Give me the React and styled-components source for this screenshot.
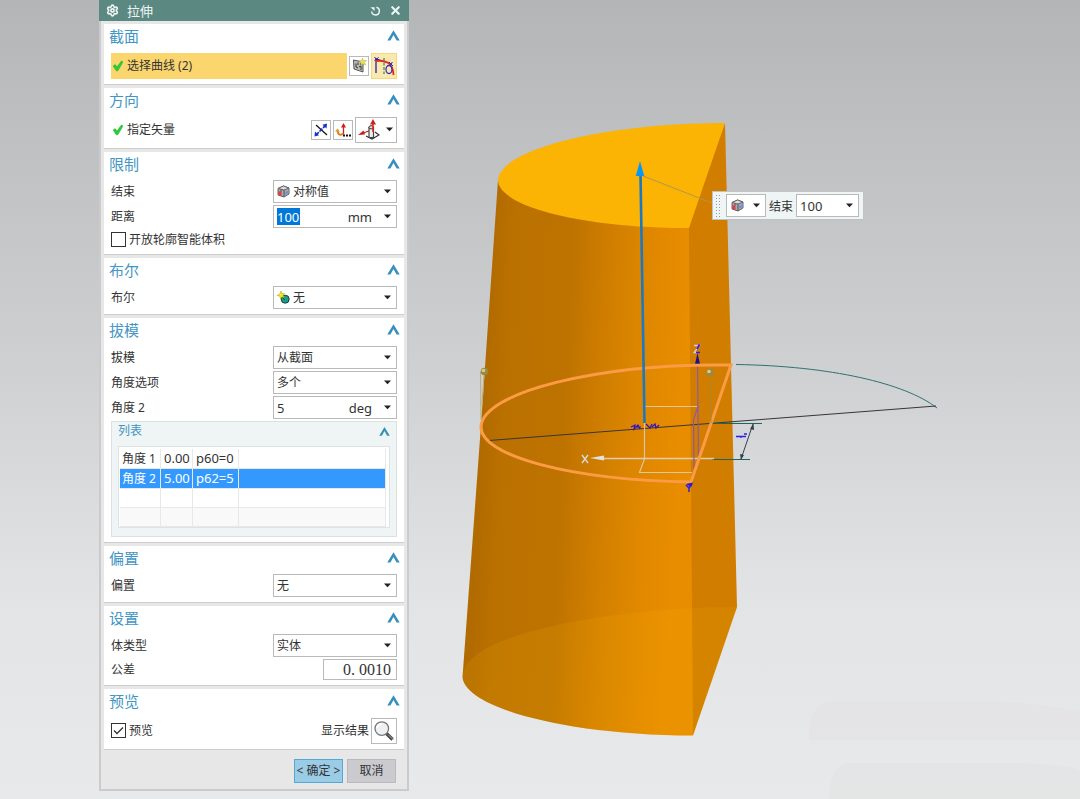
import React from "react";
import styled, { createGlobalStyle, css } from "styled-components";
import { Settings, X } from "lucide-react";

const GlobalStyle = createGlobalStyle`
  * {
    box-sizing: border-box;
  }
  body {
    margin: 0;
    font-family: "Noto Sans", "Noto Sans CJK SC", sans-serif;
    font-size: 12px;
    color: #333;
  }
  button, input, select {
    font: inherit;
    color: inherit;
    margin: 0;
    padding: 0;
  }
`;

const Page = styled.div`
  position: relative;
  display: flex;
  align-items: flex-start;
  min-height: 100vh;
  padding-left: 99px;
  overflow: hidden;
  background: linear-gradient(
    #b4b5b7 0%,
    #bdbec0 14%,
    #cfd0d2 46%,
    #dadbdc 62%,
    #e3e4e5 76%,
    #e8e9ea 100%
  );
`;

const Panel = styled.form`
  flex: 0 0 310px;
  line-height: 18px;
`;

const TitleBar = styled.header`
  display: flex;
  align-items: center;
  height: 21px;
  padding: 0 7px;
  gap: 8px;
  background: #5c8882;
  color: #edf5f3;
`;

const Title = styled.h1`
  flex: 1;
  margin: 0;
  font-size: 13px;
  font-weight: 400;
`;

const PlainButton = styled.button`
  display: flex;
  align-items: center;
  border: none;
  background: none;
  cursor: pointer;
`;

const PanelBody = styled.div`
  padding: 3px 3px 0;
  border: 2px solid #cbcbcb;
  border-top: none;
  background: #e7e7e7;
`;

const SectionBox = styled.section`
  margin-bottom: 3px;
  border-bottom: 1px solid #cdcdcd;
  background: #fff;
`;

const SectionHeader = styled.div`
  display: flex;
  align-items: center;
  justify-content: space-between;
  height: 23px;
  padding: 0 4px 0 5px;
`;

const SectionTitle = styled.h2`
  margin: 0;
  font-size: 15px;
  font-weight: 400;
  color: #4295c4;
`;

const SectionBody = styled.div`
  display: flex;
  flex-direction: column;
  gap: 2px;
  padding: 5px 7px;
`;

const Row = styled.div`
  display: flex;
  align-items: center;
  gap: 2px;
  height: ${(props) => props.$height || 23}px;
`;

const Label = styled.label`
  flex: 1;
`;

const Status = styled.div`
  display: flex;
  flex: 1;
  align-items: center;
  gap: 4px;
  height: 26px;
  padding-left: 2px;
  background: ${(props) => (props.$active ? "#fbd66f" : "transparent")};
`;

const IconButton = styled.button`
  display: flex;
  align-items: center;
  justify-content: center;
  gap: 6px;
  width: ${(props) => props.$width || 20}px;
  height: ${(props) => (props.$width ? 26 : 20)}px;
  padding-right: ${(props) => (props.$menu ? 2 : 0)}px;
  border: 1px solid #b9b9b9;
  background: #fff;
  cursor: pointer;
  ${(props) =>
    props.$active &&
    css`
      border-color: #f6d77c;
      background: #fae9ae;
    `}
`;

const Field = styled.span`
  display: flex;
  align-items: center;
  width: ${(props) => props.$width || 124}px;
  height: ${(props) => props.$height || 23}px;
  padding: 0 5px 0 3px;
  border: 1px solid #b9b9b9;
  background: #fff;
`;

const Select = styled.select`
  flex: 1;
  min-width: 0;
  height: 21px;
  border: none;
  outline: none;
  background: none;
  appearance: none;
`;

const FieldIcon = styled.span`
  display: flex;
  margin-right: 3px;
`;

const MenuButton = styled.button`
  display: flex;
  align-items: center;
  justify-content: space-between;
  width: 40px;
  height: 23px;
  padding: 0 5px 0 4px;
  border: 1px solid #b9b9b9;
  background: #fff;
  cursor: pointer;
`;

const NumberInput = styled.input`
  flex: 1;
  min-width: 0;
  border: none;
  outline: none;
  background: none;
  font-size: 13px;
`;

const SelectedInput = styled(NumberInput)`
  flex: 0 0 23px;
  height: 17px;
  background: #0078d7;
  color: #fff;
`;

const ToleranceInput = styled(NumberInput)`
  font-family: "Liberation Serif", serif;
  font-size: 16px;
  text-align: right;
`;

const Unit = styled.span`
  margin-left: auto;
  padding-right: 12px;
  font-size: 13px;
`;

const CheckLabel = styled.label`
  display: flex;
  flex: 1;
  align-items: center;
  gap: 3px;
`;

const Checkbox = styled.input`
  appearance: none;
  width: 15px;
  height: 15px;
  border: 1px solid #333;
  background: #fff;
  &:checked {
    background: #fff
      url("data:image/svg+xml,%3Csvg xmlns='http://www.w3.org/2000/svg' viewBox='0 0 13 13'%3E%3Cpath d='M2 6.5L5 9.5L11 3.5' fill='none' stroke='%23333' stroke-width='1.3'/%3E%3C/svg%3E");
  }
`;

const ListBox = styled.div`
  height: 116px;
  padding: 0 6px;
  border: 1px solid #dbe1e1;
  background: #eff5f5;
`;

const ListHeader = styled.div`
  display: flex;
  align-items: center;
  justify-content: space-between;
  height: 18px;
  margin-bottom: 6px;
`;

const ListTitle = styled.h3`
  margin: 0;
  font-size: 12px;
  font-weight: 400;
  color: #4295c4;
`;

const TableFrame = styled.div`
  height: 82px;
  padding: 2px 3px 2px 1px;
  border: 1px solid #dfe2e2;
  background: #fff;
`;

const Table = styled.table`
  width: 100%;
  table-layout: fixed;
  border-collapse: separate;
  border-spacing: 0;
`;

const Tr = styled.tr`
  height: 19px;
  background: ${(props) => (props.$selected ? "#3399ff" : "#fff")};
  color: ${(props) => (props.$selected ? "#fff" : "inherit")};
  &:last-child {
    background: #f9f9f9;
  }
`;

const Td = styled.td`
  width: ${(props) => props.$width};
  padding: 0 0 0 3px;
  border: solid #e6e8ea;
  border-width: 0 1px 1px 0;
  font-size: ${(props) => (props.$name ? 12 : 13)}px;
  line-height: 18px;
  vertical-align: baseline;
  white-space: nowrap;
  &:first-child {
    padding-left: 2px;
  }
`;

const Footer = styled.footer`
  display: flex;
  justify-content: flex-end;
  gap: 4px;
  padding: 6px 8px;
`;

const FooterButton = styled.button`
  width: 49px;
  height: 24px;
  border: 1px solid ${(props) => (props.$primary ? "#52a9d6" : "#bababd")};
  background: ${(props) => (props.$primary ? "#9bcce6" : "#cacacf")};
  white-space: nowrap;
`;

const Viewport = styled.main`
  flex: 1;
  min-width: 0;
`;

const SceneSvg = styled.svg`
  display: block;
  width: 671px;
  height: 799px;
`;

// on-canvas input that hangs off the drag arrow
const FloatingBar = styled.div`
  position: absolute;
  left: 712px;
  top: 191px;
  display: flex;
  align-items: center;
  gap: 3px;
  height: 29px;
  padding: 0 4px 0 2px;
  border: 1px solid #bfc3c3;
  background: #eff5f5;
`;

const Grip = styled.span`
  width: 6px;
  height: 24px;
  margin-right: 2px;
  background: radial-gradient(circle, #999 1px, transparent 1px) 0 0 / 3px 3px;
`;

const Chevron = ({ size = 13 }) => (
  <svg width={size} height={size} viewBox="0 0 13 13" fill="#358fbd">
    <path d="M6.5 1.3 L12.7 11.5 H9.6 L6.5 6 L3.4 11.5 H0.3 Z" />
  </svg>
);

const Caret = () => (
  <svg width="7" height="5" viewBox="0 0 7 5" fill="#222">
    <path d="M0 .5H7L3.5 4.3Z" />
  </svg>
);

const GreenCheck = () => (
  <svg width="10" height="12" viewBox="0 0 10 12">
    <path
      d="M.2 6 L2.2 4.6 L4 7 L8.4 1 L10 2 L4.8 10.8 H3.2Z"
      fill="#28cf38"
      stroke="#16a82a"
      strokeWidth=".5"
    />
  </svg>
);

const ResetIcon = () => (
  <svg width="11" height="12" viewBox="0 0 12 12">
    <path
      d="M7 2 A4.2 4.2 0 1 1 1.8 6.5"
      fill="none"
      stroke="currentColor"
      strokeWidth="1.6"
    />
    <path d="M.5 1.8 H5 V6Z" fill="currentColor" />
  </svg>
);

const CubeIcon = () => (
  <svg width="13" height="13" viewBox="0 0 13 13">
    <path d="M1 3.5 L6.5 1 L12 3 V9 L7 12 L1 10Z" fill="#aaa" stroke="#666" />
    <path d="M1 3.5 L6.5 1 L12 3 L7 5Z" fill="#ddd" stroke="#666" />
    <path d="M1 6 L4.5 7 V11 L1.5 10Z" fill="#e23b45" />
    <path d="M8 7 L12 5.5 V8 L8 9.5Z" fill="#6d93d8" />
    <path d="M7 5 V12 M4 4.3 V7" stroke="#555" />
  </svg>
);

const BooleanIcon = () => (
  <svg width="13" height="13" viewBox="0 0 13 13">
    <circle cx="8.2" cy="8.2" r="4" fill="#1c9c86" stroke="#144" />
    <path d="M4 5 L8 9" stroke="#144" />
    <path
      d="M4 0 L5 2.8 L7.5 2.4 L6 4.5 L7.5 6.5 L4.8 6 L3.5 8 L3 5.2 L0 4.5 L2.8 3.2Z"
      fill="#f3e926"
      stroke="#a99d00"
      strokeWidth=".5"
    />
  </svg>
);

const SketchIcon = () => (
  <svg width="15" height="15" viewBox="0 0 15 15">
    <path d="M1.5 2 L11 4 V14 L2 11Z" fill="#b8bdb6" stroke="#555" />
    <path
      d="M4 5.5 V9 L6 10 M6 4.5 V7 M8 6 H10 M7 9 L9 8 V12"
      fill="none"
      stroke="#333"
    />
    <path
      d="M10.5 0 L11.5 2.5 L14.5 2.5 L12.5 4.5 L14 7 L11 5.8 L9 7.3 L9 4.5 L7 3 L9.7 2.5Z"
      fill="#ece34a"
      stroke="#a3a04a"
      strokeWidth=".4"
    />
  </svg>
);

const CurveIcon = () => (
  <svg width="24" height="24" viewBox="0 0 24 24" fill="none">
    <path d="M4 19 V5 L20 10" stroke="#2722a8" strokeWidth="1.3" />
    <path d="M2.5 3 L6 7 M2.5 6.5 L6.5 3.5" stroke="#2722a8" />
    <path d="M12 4 V20" stroke="#176b52" strokeDasharray="3 1.5" />
    <path d="M4 7 C13 6 21 8 21.5 21" stroke="#f02a16" strokeWidth="1.8" />
    <ellipse cx="17" cy="15.5" rx="3" ry="4" stroke="#3430bd" strokeWidth="1.3" />
    <path d="M17 8 L21 12 M17 12 L20.5 8" stroke="#3430bd" />
  </svg>
);

const ReverseIcon = () => (
  <svg width="16" height="16" viewBox="0 0 16 16">
    <path d="M3 3 L14 13" stroke="#111" strokeWidth="1.2" />
    <path d="M3 13 L13 3" stroke="#1730bd" strokeWidth="1.6" strokeDasharray="4 1" />
    <path d="M14 1.5 L13.5 6.5 L9.5 2.8Z M1.5 14.5 L2 9.5 L6 13.3Z" fill="#1632c4" />
  </svg>
);

const VectorDialogIcon = () => (
  <svg width="16" height="16" viewBox="0 0 16 16" fill="none">
    <path d="M8.5 12 V4" stroke="#cc2018" strokeWidth="1.3" />
    <path d="M8.5 1 L11 5.5 H6Z" fill="#cc2018" />
    <path d="M8.5 11.5 C5 14 3 12 2.5 9" stroke="#e07b18" strokeWidth="2" />
    <path d="M0 9.5 L2.5 6.5 L5 9.5Z" fill="#e59a2b" />
    <path d="M8 13.5 H10 M11 13.5 H13 M14 13.5 H16" stroke="#111" strokeWidth="2" />
  </svg>
);

const VectorIcon = () => (
  <svg width="22" height="22" viewBox="0 0 22 22" fill="none">
    <path d="M4 14.5 L12 11.5" stroke="#b9201b" strokeWidth="1.2" />
    <path d="M0 16 L5.5 11.5 L7 15.5Z" fill="#c61f18" />
    <path d="M8 17 L14 20 L21 16 L17 13" stroke="#333" strokeWidth="1.2" />
    <path d="M11 8 V18.5 H15.5 V8" stroke="#444" strokeWidth="1.2" fill="#eee" />
    <ellipse cx="13.2" cy="8.3" rx="2.3" ry="1.6" stroke="#333" fill="#ddd" />
    <path d="M15 4 V13" stroke="#e02018" strokeWidth="1.5" />
    <path d="M15 0 L18 5.5 H12Z" fill="#d61c17" />
  </svg>
);

const MagnifierIcon = () => (
  <svg width="22" height="22" viewBox="0 0 22 22">
    <path d="M13 13 L19.5 19.5" stroke="#454545" strokeWidth="3.4" />
    <path d="M15 14.5 L20 19.5" stroke="#aaa986" strokeWidth="1" />
    <circle cx="8.8" cy="8.6" r="6.8" fill="#eef1f4" stroke="#777" strokeWidth="1.3" />
    <path d="M4 8 A5 5 0 0 1 9 4" fill="none" stroke="#fff" strokeWidth="2" />
  </svg>
);

const Section = ({ title, children }) => (
  <SectionBox>
    <SectionHeader>
      <SectionTitle>{title}</SectionTitle>
      <PlainButton type="button" aria-label={title}>
        <Chevron />
      </PlainButton>
    </SectionHeader>
    <SectionBody>{children}</SectionBody>
  </SectionBox>
);

const SelectRow = ({ id, label, value, icon }) => (
  <Row>
    <Label htmlFor={id}>{label}</Label>
    <Field>
      {icon && <FieldIcon>{icon}</FieldIcon>}
      <Select id={id} defaultValue={value}>
        <option>{value}</option>
      </Select>
      <Caret />
    </Field>
  </Row>
);

const angles = [
  { name: "角度 1", value: "0.00", expr: "p60=0" },
  { name: "角度 2", value: "5.00", expr: "p62=5", selected: true },
  { name: "", value: "", expr: "" },
  { name: "", value: "", expr: "" },
];

const AngleList = () => (
  <ListBox>
    <ListHeader>
      <ListTitle>列表</ListTitle>
      <PlainButton type="button" aria-label="列表">
        <Chevron size={11} />
      </PlainButton>
    </ListHeader>
    <TableFrame>
      <Table>
        <tbody>
          {angles.map((angle, i) => (
            <Tr key={i} $selected={angle.selected}>
              <Td $name $width="41px">{angle.name}</Td>
              <Td $width="32px">{angle.value}</Td>
              <Td $width="46px">{angle.expr}</Td>
              <Td />
            </Tr>
          ))}
        </tbody>
      </Table>
    </TableFrame>
  </ListBox>
);

const Ball = ({ cx, cy }) => (
  <g>
    <circle cx={cx} cy={cy} r="3.8" fill="#9c8840" />
    <circle cx={cx - 1} cy={cy - 1} r="1.8" fill="#d8cc88" />
  </g>
);

const Scene = () => (
  <SceneSvg viewBox="409 0 671 799" fill="none" aria-hidden="true">
    <defs>
      <linearGradient
        id="side"
        gradientUnits="userSpaceOnUse"
        x1="490"
        y1="300"
        x2="690"
        y2="310"
      >
        <stop offset="0" stopColor="#b26b00" />
        <stop offset=".1" stopColor="#bb7100" />
        <stop offset=".4" stopColor="#be7300" />
        <stop offset=".52" stopColor="#ca7a00" />
        <stop offset=".66" stopColor="#d68200" />
        <stop offset=".84" stopColor="#e28900" />
        <stop offset="1" stopColor="#e98d00" />
      </linearGradient>
    </defs>

    {/* floor highlights */}
    <path d="M809 730 Q812 701 835 701 H985 Q1040 703 1080 712 V740 H809Z" fill="#e1e2e4" opacity=".5" />
    <path d="M829 799 Q830 763 850 763 H1020 Q1060 764 1080 770 V799Z" fill="#dfe0e2" opacity=".4" />

    {/* solid, the flat face runs a little under the curved one */}
    <path d="M725 123 L737 607 L693 735.5 L688 700 L684 228Z" fill="#d07d00" />
    <path
      d="M498 180 L481 425 L462.5 677 C464 706 560 735 693 735.5 L689 228 L600 200Z"
      fill="url(#side)"
    />
    <path
      d="M462.5 677 C463 632 620 607 737 607 L693 735.5 C560 735 464 706 462.5 677Z"
      fill="#ffbe00"
      opacity=".12"
    />
    <path
      d="M725 123 C610 123 500 148 498 180 C498 206 580 228 689 228Z"
      fill="#fbb304"
    />

    {/* sketch curves and dimension */}
    <path d="M736 364.5 C830 366 905 383 937 408" stroke="#2d736f" />
    <path d="M489 440.5 L936 406" stroke="#3b3437" />
    <path d="M712 423.5 H762 M712 459.5 H750" stroke="#1f6658" />
    <path d="M753 424 L741 459" stroke="#343f52" />
    <path d="M753.5 423.5 L750 429 L754 430Z M741 460 L740 454 L744 455Z" fill="#343f52" />
    <path d="M736 436.5 H746 M741 436 V438 M744 434 H747" stroke="#2b22ee" strokeWidth="1.3" />
    <path
      d="M631 427 L635 425 L634 429 L638 425 L640 429 M636 427 H641 M646 424 L650 428 L652 424 M652 427 L655 424 L656 428 L659 425"
      stroke="#3010c8"
      strokeWidth="1.2"
    />

    {/* datum coordinate system */}
    <path d="M697 406.5 H644.5 V459 L639.5 472.5 H692" stroke="#e0c4a0" strokeWidth="1.2" />
    <path d="M603 458.5 H714" stroke="#e0ccb4" strokeWidth="1.4" />
    <path d="M590 458 L604 455.5 V460.5Z" fill="#e2e2e2" />
    <path d="M582 455 L588 463 M588 455 L582 463" stroke="#d9d9d9" strokeWidth="1.4" />
    <path d="M697.5 362 L698.5 456 M698 406 L693.5 420 L694 469" stroke="#9058a8" strokeWidth="1.2" />
    <path d="M697.5 353 L695 364 H700Z" fill="#20108c" />
    <path d="M694 345.5 H699.5 L694 352.5 H697" stroke="#d5c9e8" strokeWidth="1.3" />
    <path d="M699.5 344.5 L697 349 M696 352.5 H700 M698 345.5 H700" stroke="#2d20dd" strokeWidth="1.6" />

    {/* section outline */}
    <path
      d="M731 365 C600 363 482 392 481 427 C481 456 570 480 691 482Z"
      stroke="#fb9c45"
      strokeWidth="3"
    />
    <path d="M686 484 L693 482.5 L691 487Z" fill="#2418d2" />
    <path d="M686 485 L689 488 L692 484 M689 487 V492" stroke="#2d20dd" strokeWidth="1.5" />

    {/* handles */}
    <path d="M480.5 372 L481 420 M484 374 L482 405" stroke="#b8ad7c" />
    <path d="M710.5 375 L711 423" stroke="#a98a2c" />
    <Ball cx={484.5} cy={371.5} />
    <Ball cx={710} cy={372.5} />
    <path d="M643 176 L712 203" stroke="#b3964f" />
    <path d="M640.5 174 L644.5 423" stroke="#1c78c0" strokeWidth="2.6" />
    <path d="M640 161 L635.8 176 H644.2Z" fill="#0696fa" />
  </SceneSvg>
);

const App = () => {
  return (
    <>
      <GlobalStyle />
      <Page>
        <Panel onSubmit={(e) => e.preventDefault()}>
          <TitleBar>
            <Settings size={13} strokeWidth={3} />
            <Title>拉伸</Title>
            <PlainButton type="button" aria-label="重置">
              <ResetIcon />
            </PlainButton>
            <PlainButton type="button" aria-label="关闭">
              <X size={13} strokeWidth={4} />
            </PlainButton>
          </TitleBar>
          <PanelBody>
            <Section title="截面">
              <Row $height={27}>
                <Status $active>
                  <GreenCheck />
                  选择曲线 (2)
                </Status>
                <IconButton type="button" aria-label="绘制截面">
                  <SketchIcon />
                </IconButton>
                <IconButton type="button" $width={26} $active aria-label="曲线">
                  <CurveIcon />
                </IconButton>
              </Row>
            </Section>
            <Section title="方向">
              <Row $height={27}>
                <Status>
                  <GreenCheck />
                  指定矢量
                </Status>
                <IconButton type="button" aria-label="反向">
                  <ReverseIcon />
                </IconButton>
                <IconButton type="button" aria-label="矢量对话框">
                  <VectorDialogIcon />
                </IconButton>
                <IconButton type="button" $width={42} $menu aria-label="矢量">
                  <VectorIcon />
                  <Caret />
                </IconButton>
              </Row>
            </Section>
            <Section title="限制">
              <SelectRow id="end" label="结束" value="对称值" icon={<CubeIcon />} />
              <Row>
                <Label htmlFor="distance">距离</Label>
                <Field>
                  <SelectedInput id="distance" defaultValue="100" />
                  <Unit>mm</Unit>
                  <Caret />
                </Field>
              </Row>
              <Row $height={19}>
                <CheckLabel>
                  <Checkbox type="checkbox" />
                  开放轮廓智能体积
                </CheckLabel>
              </Row>
            </Section>
            <Section title="布尔">
              <SelectRow id="boolean" label="布尔" value="无" icon={<BooleanIcon />} />
            </Section>
            <Section title="拔模">
              <SelectRow id="draft" label="拔模" value="从截面" />
              <SelectRow id="angleOption" label="角度选项" value="多个" />
              <Row>
                <Label htmlFor="angle">角度 2</Label>
                <Field>
                  <NumberInput id="angle" defaultValue="5" />
                  <Unit>deg</Unit>
                  <Caret />
                </Field>
              </Row>
              <AngleList />
            </Section>
            <Section title="偏置">
              <SelectRow id="offset" label="偏置" value="无" />
            </Section>
            <Section title="设置">
              <SelectRow id="bodyType" label="体类型" value="实体" />
              <Row $height={21}>
                <Label htmlFor="tolerance">公差</Label>
                <Field $width={74} $height={21}>
                  <ToleranceInput id="tolerance" defaultValue="0. 0010" />
                </Field>
              </Row>
            </Section>
            <Section title="预览">
              <Row $height={27}>
                <CheckLabel>
                  <Checkbox type="checkbox" defaultChecked />
                  预览
                </CheckLabel>
                <span id="showResult">显示结果</span>
                <IconButton type="button" $width={26} aria-labelledby="showResult">
                  <MagnifierIcon />
                </IconButton>
              </Row>
            </Section>
            <Footer>
              <FooterButton type="submit" $primary>
                &lt; 确定 &gt;
              </FooterButton>
              <FooterButton type="button">取消</FooterButton>
            </Footer>
          </PanelBody>
        </Panel>
        <Viewport>
          <Scene />
        </Viewport>
        <FloatingBar>
          <Grip />
          <MenuButton type="button" aria-label="结束选项">
            <CubeIcon />
            <Caret />
          </MenuButton>
          <label htmlFor="endValue">结束</label>
          <Field $width={63}>
            <NumberInput id="endValue" defaultValue="100" />
            <Caret />
          </Field>
        </FloatingBar>
      </Page>
    </>
  );
};

export default App;
